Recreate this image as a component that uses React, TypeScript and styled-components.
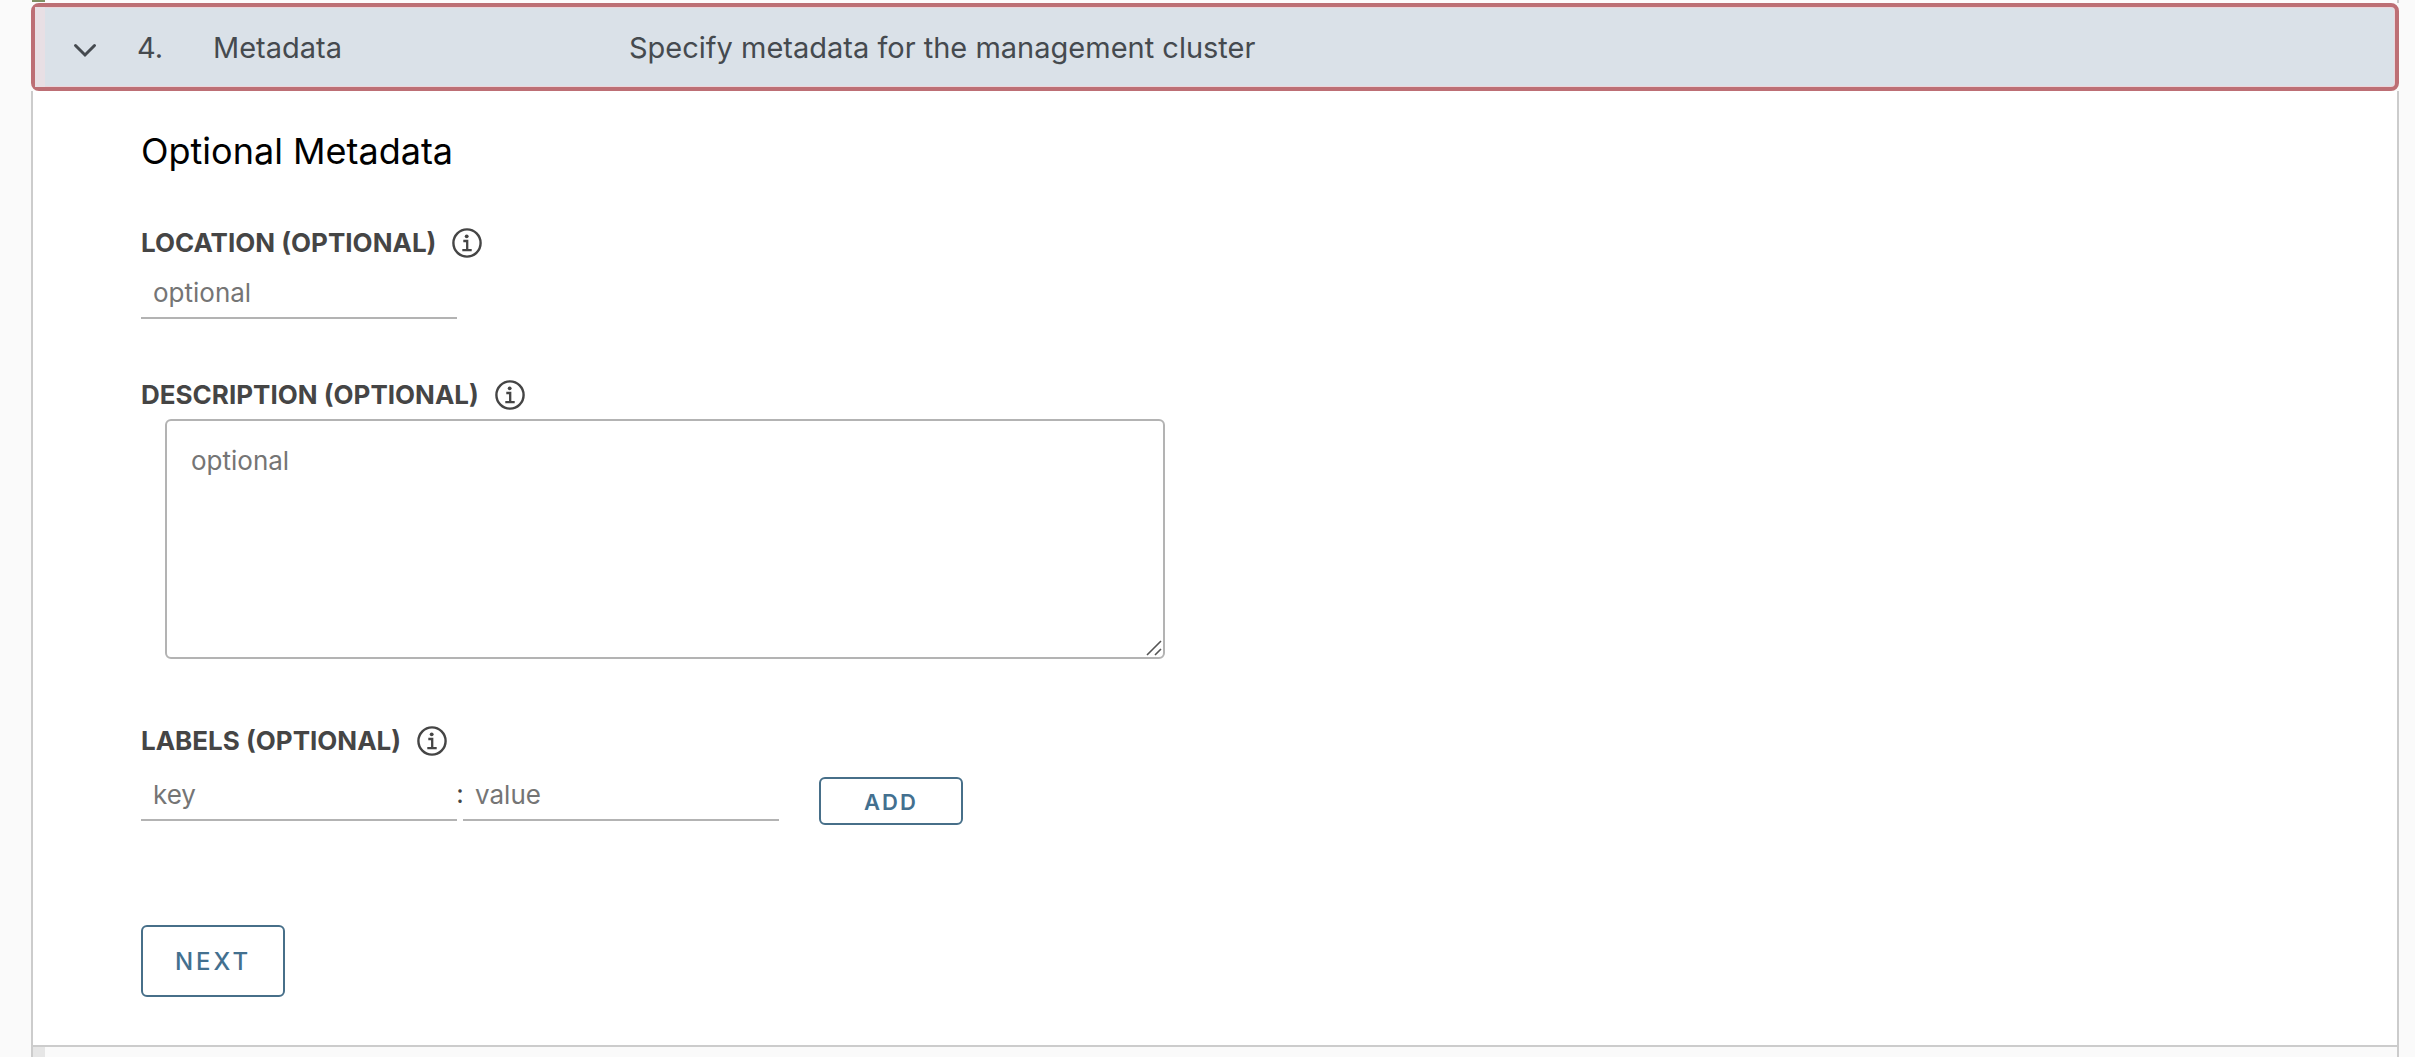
import React from "react";
import styled, { createGlobalStyle } from "styled-components";

const GlobalStyle = createGlobalStyle`
  *, *::before, *::after { box-sizing: border-box; }
  body {
    margin: 0;
    background: #fafafa;
    color: #454545;
    font-family: Inter, "Noto Sans", sans-serif;
    font-size: 26px;
    line-height: 36px;
  }
  button, input, textarea { font: inherit; }
`;

const Page = styled.main`
  min-height: 100vh;
  padding: 0 16px 0 31px;
  display: flex;
  flex-direction: column;
`;

const PreviousStep = styled.div`
  height: 3px;
  background: #fdfbfc;
  border-right: 2px solid #cccccc;
  padding-left: 1px;
`;

const DoneStrip = styled.div`
  width: 13px;
  height: 2px;
  background: #7f8f62;
`;

const StepHeader = styled.button`
  width: 100%;
  height: 88px;
  padding: 0;
  display: flex;
  align-items: center;
  text-align: left;
  font-size: 29px;
  color: #454a4f;
  background: #dae1e8;
  border: 4px solid #bd6f75;
  border-radius: 8px;
  box-shadow: inset 0 0 0 1px #ecd5da;
  cursor: pointer;
`;

const StatusStrip = styled.span`
  align-self: stretch;
  width: 10px;
  margin-right: 28px;
  background: #e8dfe4;
`;

const Chevron = styled.svg`
  width: 24px;
  height: 24px;
  margin: 6px 40px 0 0;
`;

const StepText = styled.span<{ $width?: number }>`
  width: ${(p) => (p.$width ? `${p.$width}px` : "auto")};
  padding-top: 2px;
`;

const StepBody = styled.form`
  display: flex;
  flex-direction: column;
  align-items: flex-start;
  padding: 36px 108px 48px;
  background: #ffffff;
  border: 2px solid #cccccc;
  border-top: 0;
`;

const Heading = styled.h3`
  margin: 0 0 50px;
  font-size: 36px;
  line-height: 48px;
  font-weight: 400;
  color: #000000;
`;

const Field = styled.div<{ $gap: number; $after: number }>`
  display: flex;
  flex-direction: column;
  align-items: flex-start;
  gap: ${(p) => p.$gap}px;
  margin-bottom: ${(p) => p.$after}px;
`;

const LabelRow = styled.div`
  display: flex;
  align-items: center;
  gap: 16px;
`;

const FieldLabel = styled.label`
  font-size: 26px;
  font-weight: 700;
  text-transform: uppercase;
`;

const InfoButton = styled.button`
  display: flex;
  padding: 0;
  border: 0;
  background: none;
  color: #454545;
  cursor: pointer;

  svg { width: 30px; height: 30px; }
`;

const TextInput = styled.input`
  width: 316px;
  height: 48px;
  padding: 3px 12px 7px;
  border: 0;
  border-bottom: 2px solid #b3b3b3;
  background: transparent;
  color: #454545;
  outline: none;

  &::placeholder { color: #757575; opacity: 1; }
`;

const AreaWrap = styled.div`
  position: relative;
  display: grid;
  margin-left: 24px;
`;

const TextArea = styled.textarea`
  width: 1000px;
  height: 240px;
  padding: 22px 24px;
  border: 2px solid #b3b3b3;
  border-radius: 6px;
  background: #ffffff;
  color: #454545;
  outline: none;
  resize: both;

  &::placeholder { color: #757575; opacity: 1; }
  &::-webkit-resizer { background: transparent; }
`;

const Grip = styled.svg`
  position: absolute;
  right: 3px;
  bottom: 3px;
  width: 16px;
  height: 16px;
  pointer-events: none;
`;

const PairRow = styled.div`
  display: flex;
  align-items: flex-start;
`;

const Colon = styled.span`
  width: 6px;
  padding-top: 3px;
  display: flex;
  justify-content: center;
`;

const OutlineButton = styled.button<{ $small?: boolean }>`
  width: 144px;
  height: ${(p) => (p.$small ? 48 : 72)}px;
  margin: ${(p) => (p.$small ? "4px 0 0 40px" : "0")};
  padding: 2px 0 0;
  border: 2px solid #476f89;
  border-radius: 6px;
  background: transparent;
  color: #43708f;
  font-size: ${(p) => (p.$small ? 22 : 24)}px;
  font-weight: ${(p) => (p.$small ? 600 : 500)};
  letter-spacing: ${(p) => (p.$small ? 2 : 3)}px;
  cursor: pointer;
`;

const NextStep = styled.div`
  flex: 1;
  min-height: 10px;
  border: solid #cccccc;
  border-width: 0 2px;
  display: flex;
`;

const PendingStrip = styled.div`
  width: 12px;
  background: #e6e6e6;
`;

function Info({ about }: { about: string }) {
  return (
    <InfoButton type="button" aria-label={`About ${about}`}>
      <svg viewBox="0 0 30 30" fill="none" stroke="currentColor" aria-hidden="true">
        <circle cx="15" cy="15" r="13.6" strokeWidth="2.4" />
        <circle cx="14.7" cy="8.3" r="1.9" fill="currentColor" stroke="none" />
        <path d="M11.3 13H15.2V22M10.3 22.2H19.7" strokeWidth="2.3" />
      </svg>
    </InfoButton>
  );
}

export default function App() {
  return (
    <>
      <GlobalStyle />
      <Page>
        <PreviousStep>
          <DoneStrip />
        </PreviousStep>
        <StepHeader type="button" aria-expanded="true" aria-controls="metadata-step">
          <StatusStrip />
          <Chevron viewBox="0 0 24 24" fill="none" aria-hidden="true">
            <path d="M2.5 7.5L12 17L21.5 7.5" stroke="#454a4f" strokeWidth="3" strokeLinecap="round" />
          </Chevron>
          <StepText $width={76}>4.</StepText>
          <StepText $width={416}>Metadata</StepText>
          <StepText>Specify metadata for the management cluster</StepText>
        </StepHeader>
        <StepBody id="metadata-step" onSubmit={(e) => e.preventDefault()}>
          <Heading>Optional Metadata</Heading>
          <Field $gap={10} $after={58}>
            <LabelRow>
              <FieldLabel htmlFor="location">Location (optional)</FieldLabel>
              <Info about="location" />
            </LabelRow>
            <TextInput id="location" placeholder="optional" />
          </Field>
          <Field $gap={6} $after={64}>
            <LabelRow>
              <FieldLabel htmlFor="description">Description (optional)</FieldLabel>
              <Info about="description" />
            </LabelRow>
            <AreaWrap>
              <TextArea id="description" placeholder="optional" />
              <Grip viewBox="0 0 16 16" aria-hidden="true">
                <path d="M1 15L15 1M9 15L15 9" stroke="#555555" strokeWidth="1.6" />
              </Grip>
            </AreaWrap>
          </Field>
          <Field $gap={14} $after={100}>
            <LabelRow>
              <FieldLabel htmlFor="label-key">Labels (optional)</FieldLabel>
              <Info about="labels" />
            </LabelRow>
            <PairRow>
              <TextInput id="label-key" placeholder="key" />
              <Colon>:</Colon>
              <TextInput aria-label="Label value" placeholder="value" />
              <OutlineButton type="button" $small>ADD</OutlineButton>
            </PairRow>
          </Field>
          <OutlineButton type="submit">NEXT</OutlineButton>
        </StepBody>
        <NextStep>
          <PendingStrip />
        </NextStep>
      </Page>
    </>
  );
}
